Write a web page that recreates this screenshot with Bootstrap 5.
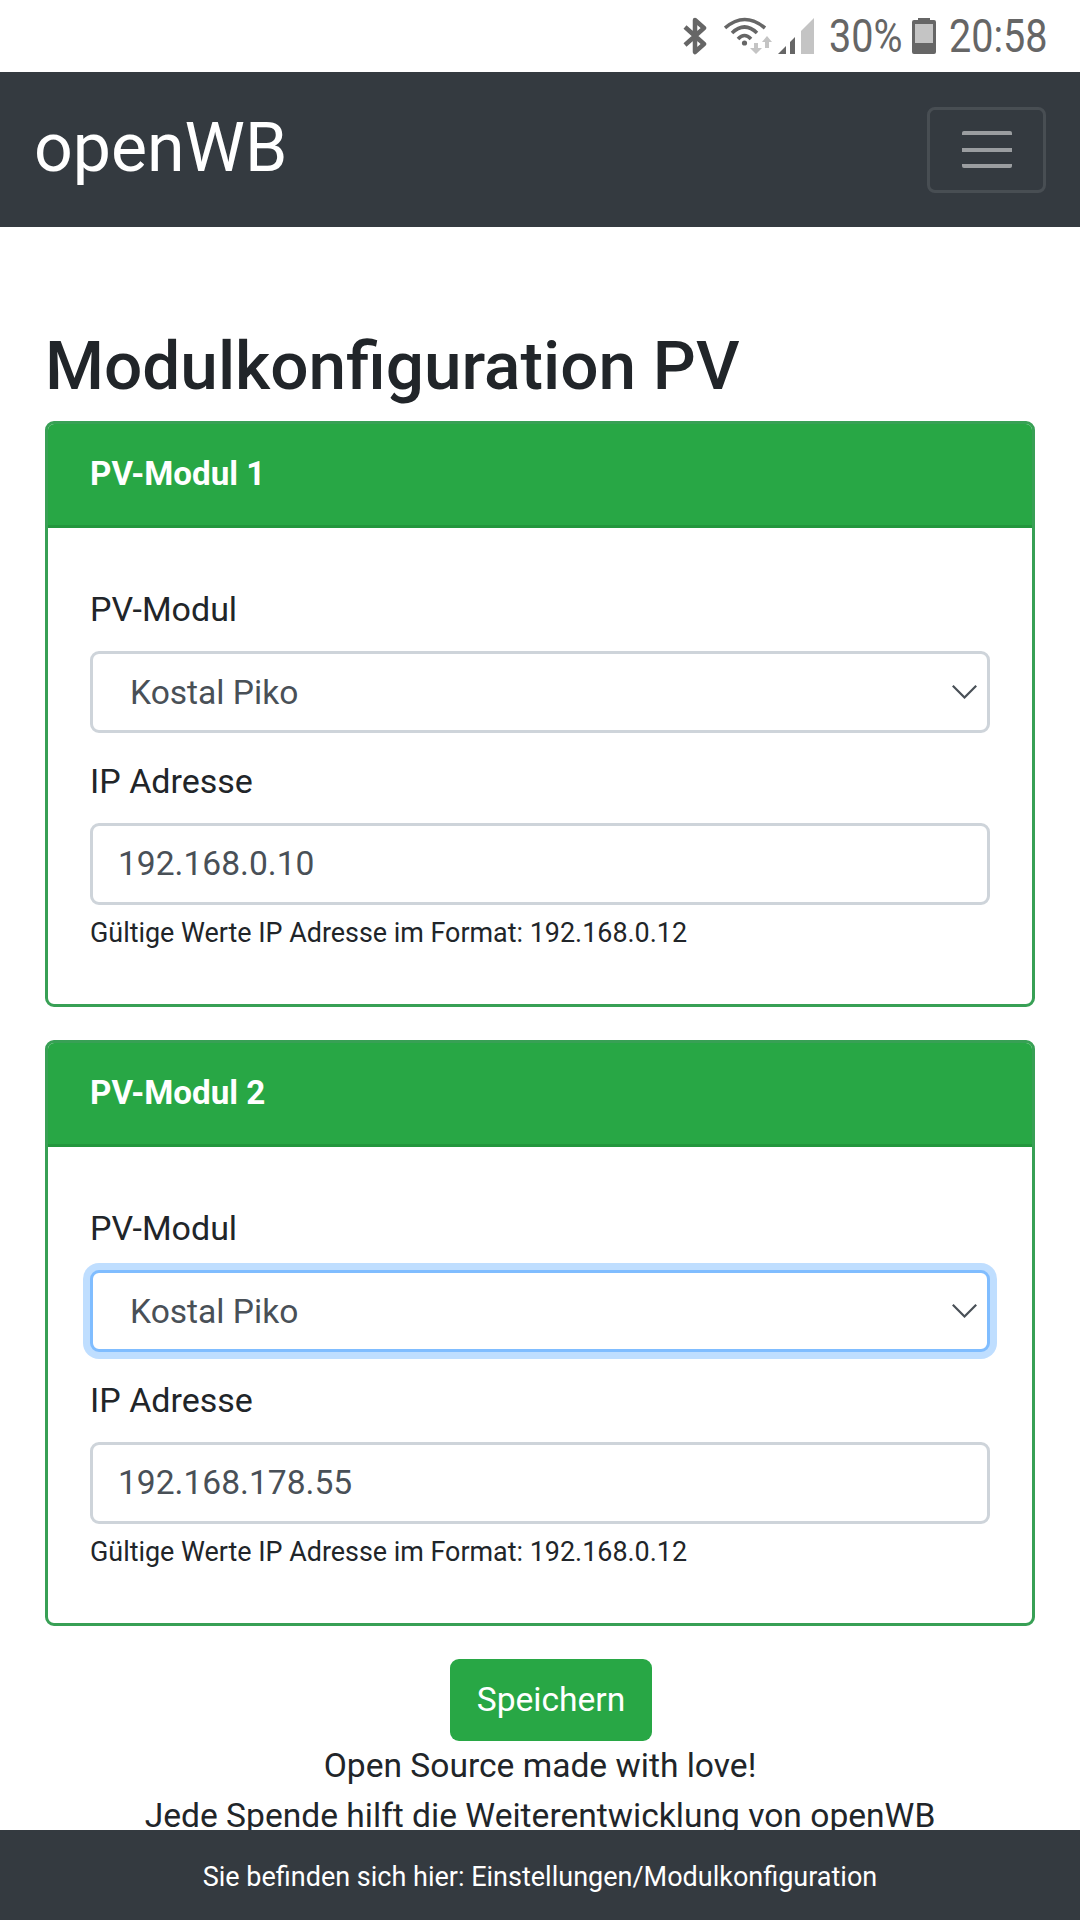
<!DOCTYPE html>
<html lang="de">
<head>
  <meta charset="UTF-8">
  <meta name="viewport" content="width=device-width, initial-scale=1.0">
  <title>openWB</title>
  <link href="https://cdn.jsdelivr.net/npm/bootstrap@5.3.0/dist/css/bootstrap.min.css" rel="stylesheet">
  <style>
    html, body {
      height: 1920px;
      overflow: hidden;
    }
    body {
      font-family: Roboto, "Liberation Sans", sans-serif;
      font-size: 33.6px;
      line-height: 50px;
      color: #212529;
    }
    .status-bar {
      height: 72px;
      padding-right: 33px;
      color: #666;
      font-size: 46px;
      line-height: 72px;
    }
    .status-text {
      display: inline-block;
      transform: scaleX(.86);
      transform-origin: left center;
      white-space: nowrap;
    }
    .status-bt { margin-right: 17px; }
    .status-signal { margin-left: 4px; }
    .status-pct { width: 71px; margin-left: 15px; }
    .status-batt { margin-left: 12px; }
    .status-time { width: 98px; margin-left: 13px; }
    .top-nav {
      height: 155px;
      padding: 0 34px;
      background-color: #343a40;
    }
    .top-nav .navbar-brand {
      margin: 0;
      padding: 0 0 4px;
      font-size: 68px;
      line-height: 1;
      color: #fff;
    }
    .top-nav .navbar-toggler {
      width: 119px;
      height: 86px;
      padding: 0;
      border: 3px solid rgba(255,255,255,.1);
      border-radius: 8px;
    }
    .toggler-bars {
      display: block;
      width: 50px;
      height: 37px;
      margin: 0 auto;
      background: linear-gradient(rgba(255,255,255,.5) 0 0) 0 0 / 100% 4px no-repeat,
                  linear-gradient(rgba(255,255,255,.5) 0 0) 0 50% / 100% 4px no-repeat,
                  linear-gradient(rgba(255,255,255,.5) 0 0) 0 100% / 100% 4px no-repeat;
      border-radius: 2px;
    }
    .page-wrap { padding: 0 45px; }
    .page-title {
      margin: 0;
      padding-top: 97px;
      height: 194px;
      font-size: 67.5px;
      line-height: 84px;
      font-weight: 500;
    }
    .module-card {
      margin-bottom: 33px;
      border: 3px solid #38a055;
      border-radius: 9px;
    }
    .module-card .card-header {
      height: 104px;
      padding: 0 42px;
      background-color: #28a745;
      border-bottom: 3px solid #23963d;
      border-radius: 6px 6px 0 0;
      color: #fff;
      font-size: 33.2px;
      font-weight: 700;
      line-height: 99px;
    }
    .module-card .card-body { padding: 56px 42px 0; height: 476px; }
    .field-label {
      display: block;
      margin-bottom: 17px;
      font-size: 34px;
      line-height: 50px;
    }
    .module-card .form-select,
    .module-card .form-control {
      height: 82px;
      padding: 0 25px 2px;
      border: 3px solid #ced4da;
      border-radius: 9px;
      color: #495057;
      font-size: 33.6px;
      line-height: 50px;
    }
    .module-card .form-select {
      margin-bottom: 23px;
      padding: 2px 25px 0 37px;
      background-image: url("data:image/svg+xml,%3csvg xmlns='http://www.w3.org/2000/svg' viewBox='0 0 25 14'%3e%3cpath fill='none' stroke='%23495057' stroke-width='2.2' d='M.8.8l11.7 11.7L24.2.8'/%3e%3c/svg%3e");
      background-position: right 10px center;
      background-size: 25px 14px;
    }
    .module-card .form-select.select-active {
      border-color: #80bdff;
      box-shadow: 0 0 0 7px rgba(0,123,255,.25);
    }
    .field-help {
      margin-top: 7px;
      font-size: 26.9px;
      line-height: 42px;
    }
    .save-row {
      padding-left: 22px;
      text-align: center;
    }
    .save-btn {
      width: 202px;
      height: 82px;
      padding: 0;
      background-color: #28a745;
      border: 0;
      border-radius: 9px;
      color: #fff;
      font-size: 33.6px;
    }
    .love-text { text-align: center; }
    .foot-bar {
      height: 90px;
      background-color: #343a40;
      color: #fff;
      font-size: 27px;
      line-height: 94px;
      text-align: center;
    }
  </style>
</head>
<body>
  <div class="status-bar d-flex align-items-center justify-content-end">
    <svg class="status-bt" width="24" height="38" viewBox="0 0 24 38"><path fill="none" stroke="#666" stroke-width="4.5" stroke-linejoin="round" d="M2 10l19 17-9 8V3l9 8L2 28"/></svg>
    <svg width="50" height="38" viewBox="0 0 50 38">
      <path fill="none" stroke="#666" stroke-width="3.6" d="M1 11Q20.500-6 41 11M8 16Q20.500 4 33 16M14 22Q20.500 15 27 22"/>
      <circle cx="20.500" cy="26" r="2.600" fill="#666"/>
      <path fill="#c4c4c4" d="M30 26h4v5h4l-6 6-6-6h4zM41 31h4v-6h3l-5-6-5 6h3z"/>
    </svg>
    <svg class="status-signal" width="36" height="36" viewBox="0 0 36 36">
      <path fill="#666" d="M0 36L8 28v8zM12 24l5-5v17h-5z"/>
      <path fill="#c4c4c4" d="M23 13L36 0v36H23z"/>
    </svg>
    <span class="status-text status-pct">30%</span>
    <svg class="status-batt" width="24" height="36" viewBox="0 0 24 36">
      <path fill="#666" d="M6 0h12v2h4q2 0 2 2v30q0 2-2 2H2q-2 0-2-2V4q0-2 2-2h4z"/>
      <path fill="#c4c4c4" d="M3 6h18v19H3z"/>
    </svg>
    <span class="status-text status-time">20:58</span>
  </div>

  <nav class="navbar top-nav">
    <a class="navbar-brand" href="#">openWB</a>
    <button class="navbar-toggler" type="button"><span class="toggler-bars"></span></button>
  </nav>

  <div class="page-wrap">
    <h1 class="page-title">Modulkonfiguration PV</h1>

    <div class="card module-card">
      <div class="card-header">PV-Modul 1</div>
      <div class="card-body">
        <label class="field-label">PV-Modul</label>
        <select class="form-select"><option>Kostal Piko</option></select>
        <label class="field-label">IP Adresse</label>
        <input type="text" class="form-control" value="192.168.0.10">
        <div class="field-help">Gültige Werte IP Adresse im Format: 192.168.0.12</div>
      </div>
    </div>

    <div class="card module-card">
      <div class="card-header">PV-Modul 2</div>
      <div class="card-body">
        <label class="field-label">PV-Modul</label>
        <select class="form-select select-active"><option>Kostal Piko</option></select>
        <label class="field-label">IP Adresse</label>
        <input type="text" class="form-control" value="192.168.178.55">
        <div class="field-help">Gültige Werte IP Adresse im Format: 192.168.0.12</div>
      </div>
    </div>

    <div class="save-row"><button type="button" class="btn save-btn">Speichern</button></div>
    <div class="love-text">Open Source made with love!<br>Jede Spende hilft die Weiterentwicklung von openWB</div>
  </div>

  <div class="foot-bar fixed-bottom">Sie befinden sich hier: Einstellungen/Modulkonfiguration</div>

  <script src="https://cdn.jsdelivr.net/npm/bootstrap@5.3.0/dist/js/bootstrap.bundle.min.js"></script>
</body>
</html>
